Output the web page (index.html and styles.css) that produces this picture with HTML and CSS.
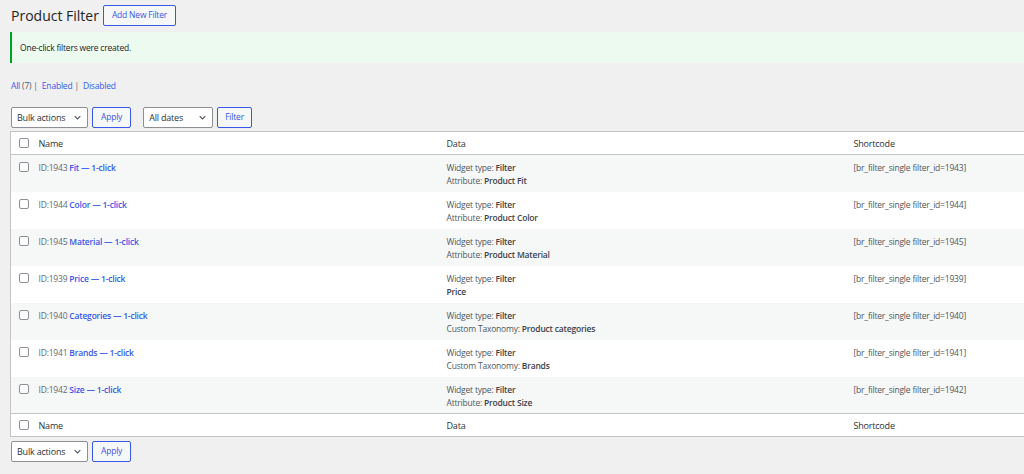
FILE: index.html
```html
<!DOCTYPE html>
<html>
<head>
  <title>Product Filter</title>
  <meta http-equiv="Content-Type" content="text/html; charset=UTF-8" />
  <link rel="stylesheet" href="styles.css">
</head>
<body>
  <div class="wrap">
    <div class="page-head">
      <h1>Product Filter</h1>
      <a class="button">Add New Filter</a>
    </div>

    <div class="notice">
      <p>One-click filters were created.</p>
    </div>

    <ul class="subsubsub">
      <li><a>All <span class="count">(7)</span></a> |</li>
      <li><a>Enabled</a> |</li>
      <li><a>Disabled</a></li>
    </ul>

    <div class="tablenav top">
      <div class="actions">
        <div class="select bulk">Bulk actions <svg viewBox="0 0 10 6"><path d="M1 1l4 4 4-4"/></svg></div>
        <a class="button">Apply</a>
      </div>
      <div class="actions">
        <div class="select dates">All dates <svg viewBox="0 0 10 6"><path d="M1 1l4 4 4-4"/></svg></div>
        <a class="button narrow">Filter</a>
      </div>
    </div>

    <table class="list">
      <colgroup>
        <col class="c-cb">
        <col class="c-name">
        <col class="c-data">
        <col>
      </colgroup>
      <thead>
        <tr><th><span class="cb"></span></th><th>Name</th><th>Data</th><th>Shortcode</th></tr>
      </thead>
      <tbody>
        <tr>
          <td><span class="cb"></span></td>
          <td><span class="id">ID:1943</span> <a class="title">Fit — 1-click</a></td>
          <td>Widget type: <b>Filter</b><br>Attribute: <b>Product Fit</b></td>
          <td class="code">[br_filter_single filter_id=1943]</td>
        </tr>
        <tr>
          <td><span class="cb"></span></td>
          <td><span class="id">ID:1944</span> <a class="title">Color — 1-click</a></td>
          <td>Widget type: <b>Filter</b><br>Attribute: <b>Product Color</b></td>
          <td class="code">[br_filter_single filter_id=1944]</td>
        </tr>
        <tr>
          <td><span class="cb"></span></td>
          <td><span class="id">ID:1945</span> <a class="title">Material — 1-click</a></td>
          <td>Widget type: <b>Filter</b><br>Attribute: <b>Product Material</b></td>
          <td class="code">[br_filter_single filter_id=1945]</td>
        </tr>
        <tr>
          <td><span class="cb"></span></td>
          <td><span class="id">ID:1939</span> <a class="title">Price — 1-click</a></td>
          <td>Widget type: <b>Filter</b><br><b>Price</b></td>
          <td class="code">[br_filter_single filter_id=1939]</td>
        </tr>
        <tr>
          <td><span class="cb"></span></td>
          <td><span class="id">ID:1940</span> <a class="title">Categories — 1-click</a></td>
          <td>Widget type: <b>Filter</b><br>Custom Taxonomy: <b>Product categories</b></td>
          <td class="code">[br_filter_single filter_id=1940]</td>
        </tr>
        <tr>
          <td><span class="cb"></span></td>
          <td><span class="id">ID:1941</span> <a class="title">Brands — 1-click</a></td>
          <td>Widget type: <b>Filter</b><br>Custom Taxonomy: <b>Brands</b></td>
          <td class="code">[br_filter_single filter_id=1941]</td>
        </tr>
        <tr>
          <td><span class="cb"></span></td>
          <td><span class="id">ID:1942</span> <a class="title">Size — 1-click</a></td>
          <td>Widget type: <b>Filter</b><br>Attribute: <b>Product Size</b></td>
          <td class="code">[br_filter_single filter_id=1942]</td>
        </tr>
      </tbody>
      <tfoot>
        <tr><th><span class="cb"></span></th><th>Name</th><th>Data</th><th>Shortcode</th></tr>
      </tfoot>
    </table>

    <div class="tablenav bottom">
      <div class="actions">
        <div class="select bulk">Bulk actions <svg viewBox="0 0 10 6"><path d="M1 1l4 4 4-4"/></svg></div>
        <a class="button">Apply</a>
      </div>
    </div>
  </div>
</body>
</html>
```

FILE: styles.css
```css
html, body {
  margin: 0;
  overflow: hidden;
}
body {
  background: #f0f0f1;
  color: #3c434a;
  font-family: "Open Sans", "Liberation Sans", sans-serif;
  font-size: 8.5px;
  letter-spacing: -0.2px;
  line-height: 1.5;
}
.wrap {
  width: 1030px;
  padding-left: 10px;
}
a {
  color: #3858e9;
  text-decoration: none;
}

/* heading */
.page-head {
  display: flex;
  align-items: center;
  gap: 4px;
  padding-top: 5px;
  height: 21px;
}
h1 {
  margin: 0 0 0 1px;
  font-size: 14px;
  font-weight: 400;
  letter-spacing: 0;
  color: #1d2327;
  line-height: 21px;
}
.button {
  display: inline-flex;
  align-items: center;
  box-sizing: border-box;
  height: 21px;
  padding: 0 8px;
  border: 1px solid #3858e9;
  border-radius: 2px;
  background: #f6f7f7;
  color: #3858e9;
}
.button.narrow {
  padding: 0 7px;
}

/* notice */
.notice {
  margin-top: 6px;
  height: 31px;
  box-sizing: border-box;
  border-left: 2px solid #00a32a;
  background: #edfaef;
  display: flex;
  align-items: center;
  padding: 1px 0 0 8px;
}
.notice p {
  margin: 0;
  color: #1d2327;
}

/* status links */
.subsubsub {
  list-style: none;
  margin: 17px 0 0 1px;
  padding: 0;
  display: flex;
  gap: 4px;
  color: #646970;
  height: 14px;
}
.subsubsub .count {
  color: #50575e;
}

/* bulk bars */
.tablenav {
  display: flex;
  gap: 12px;
  margin-left: 1px;
}
.tablenav.top {
  margin-top: 13px;
  height: 24px;
}
.tablenav.bottom {
  margin-top: 4px;
}
.actions {
  display: flex;
  gap: 4px;
}
.select {
  display: flex;
  align-items: center;
  justify-content: space-between;
  box-sizing: border-box;
  height: 21px;
  padding: 0 6px 0 5px;
  border: 1px solid #8c8f94;
  border-radius: 2px;
  background: #fff;
  color: #2c3338;
  font-size: 9px;
}
.select svg {
  width: 7px;
  height: 5px;
  fill: none;
  stroke: #50575e;
  stroke-width: 1.6;
}
.select.bulk { width: 77px; }
.select.dates { width: 70px; }

/* table */
.list {
  width: 100%;
  table-layout: fixed;
  border-collapse: collapse;
  background: #fff;
  border: 1px solid #c3c4c7;
}
.c-cb { width: 23px; }
.c-name { width: 408px; }
.c-data { width: 407px; }
.list th {
  text-align: left;
  font-weight: 400;
  color: #2c3338;
  height: 21px;
  padding: 1px 5px 0;
  font-size: 9px;
}
.list thead th {
  border-bottom: 1px solid #c3c4c7;
}
.list tfoot th {
  border-top: 1px solid #c3c4c7;
}
.list td {
  vertical-align: top;
  height: 37px;
  box-sizing: border-box;
  padding: 6px 5px 0;
  color: #50575e;
  line-height: 13px;
}
.list tbody tr:nth-child(odd) {
  background: #f6f7f7;
}
.list th:first-child,
.list td:first-child {
  padding: 0 0 0 8px;
}
.list td:first-child {
  padding-top: 7px;
}
.cb {
  display: block;
  width: 10px;
  height: 10px;
  box-sizing: border-box;
  border: 1px solid #8c8f94;
  border-radius: 2px;
  background: #fff;
}
.list td b {
  color: #3c434a;
  font-weight: 600;
}
.id {
  color: #646970;
}
.title {
  font-weight: 600;
}
.code {
  color: #646970;
}
```
